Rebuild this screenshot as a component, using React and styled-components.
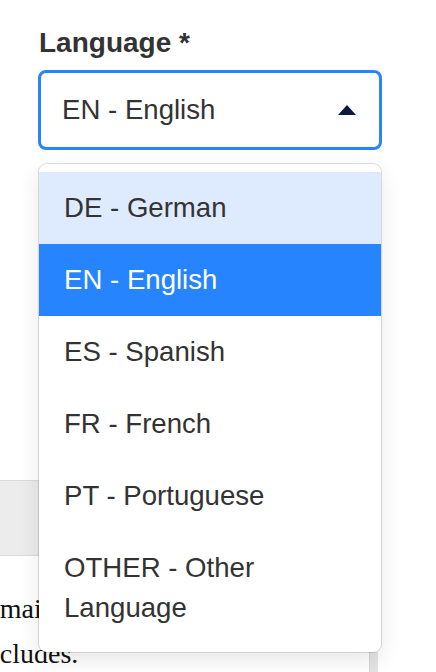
import React, { useState } from "react";
import styled, { createGlobalStyle } from "styled-components";

const GlobalStyle = createGlobalStyle`
  html, body {
    margin: 0;
    padding: 0;
    background: #fff;
    overflow: hidden;
  }
  body {
    font-family: "Liberation Sans", Arial, Helvetica, sans-serif;
  }
`;

const languages = [
  { value: "DE", label: "German" },
  { value: "EN", label: "English" },
  { value: "ES", label: "Spanish" },
  { value: "FR", label: "French" },
  { value: "PT", label: "Portuguese" },
  { value: "OTHER", label: "Other Language" },
];

const Page = styled.div`
  position: relative;
  width: 436px;
  height: 672px;
  overflow: hidden;
`;

const Field = styled.div`
  position: relative;
  z-index: 2;
  padding: 26px 54px 0 38px;
`;

const Label = styled.label`
  display: block;
  margin-bottom: 10px;
  padding-left: 1px;
  font-size: 28px;
  line-height: 34px;
  font-weight: 700;
  color: #333;
`;

const Control = styled.div`
  box-sizing: border-box;
  display: flex;
  align-items: center;
  justify-content: space-between;
  height: 80px;
  padding: 0 23px 0 21px;
  border: 3px solid ${(p) => (p.$focused ? "#2684ff" : "#ccc")};
  border-radius: 8px;
  background: #fff;
  cursor: pointer;
`;

const Value = styled.span`
  font-size: 27.6px;
  color: #333;
`;

const Caret = styled.svg`
  width: 18px;
  height: 10px;
  display: block;
`;

const Menu = styled.div`
  position: absolute;
  left: 39px;
  right: 55px;
  top: calc(100% + 14px);
  background: #fff;
  border-radius: 8px;
  box-shadow: 0 0 0 1px rgba(0, 0, 0, 0.12), 0 8px 22px rgba(0, 0, 0, 0.1);
`;

const MenuList = styled.ul`
  list-style: none;
  margin: 0;
  padding: 8px 0;
`;

const Option = styled.li`
  padding: 16px 24px 16px 25px;
  font-size: 27.6px;
  line-height: 40px;
  color: ${(p) => (p.$selected ? "#fff" : "#333")};
  background: ${(p) =>
    p.$selected ? "#2684ff" : p.$focused ? "#deebff" : "transparent"};
  cursor: default;
`;

const Backdrop = styled.div`
  position: relative;
  z-index: 1;
  width: 378px;
  margin-top: 330px;
`;

const Band = styled.div`
  height: 74px;
  background: linear-gradient(to right, #ececec, #e9e9e9);
  border-top: 1px solid #dadada;
  border-bottom: 1px solid #dadada;
`;

const Bottom = styled.div`
  display: flex;
  margin-top: 30px;
`;

const Paragraph = styled.p`
  flex: 1;
  margin: 0 0 0 -22px;
  font-family: "Liberation Serif", "Times New Roman", serif;
  font-size: 28px;
  line-height: 45px;
  color: #111;
`;

const ScrollEdge = styled.div`
  align-self: flex-end;
  width: 8px;
  height: 24px;
  background: #e3e3e3;
  border-left: 1px solid #d4d4d4;
`;

export default function App() {
  const [selected, setSelected] = useState("EN");
  const [hovered, setHovered] = useState("DE");
  const current = languages.find((l) => l.value === selected);

  return (
    <Page>
      <GlobalStyle />
      <Field>
        <Label>Language *</Label>
        <Control $focused>
          <Value>
            {current.value} - {current.label}
          </Value>
          <Caret viewBox="0 0 18 10">
            <path d="M9 0 L18 10 L0 10 Z" fill="#0c1a3c" />
          </Caret>
        </Control>
        <Menu>
          <MenuList>
            {languages.map((l) => (
              <Option
                key={l.value}
                $selected={l.value === selected}
                $focused={l.value === hovered}
                onMouseEnter={() => setHovered(l.value)}
                onClick={() => setSelected(l.value)}
              >
                {l.value} - {l.label}
              </Option>
            ))}
          </MenuList>
        </Menu>
      </Field>

      <Backdrop>
        <Band />
        <Bottom>
          <Paragraph>
            remain
            <br />
            includes.
          </Paragraph>
          <ScrollEdge />
        </Bottom>
      </Backdrop>
    </Page>
  );
}
